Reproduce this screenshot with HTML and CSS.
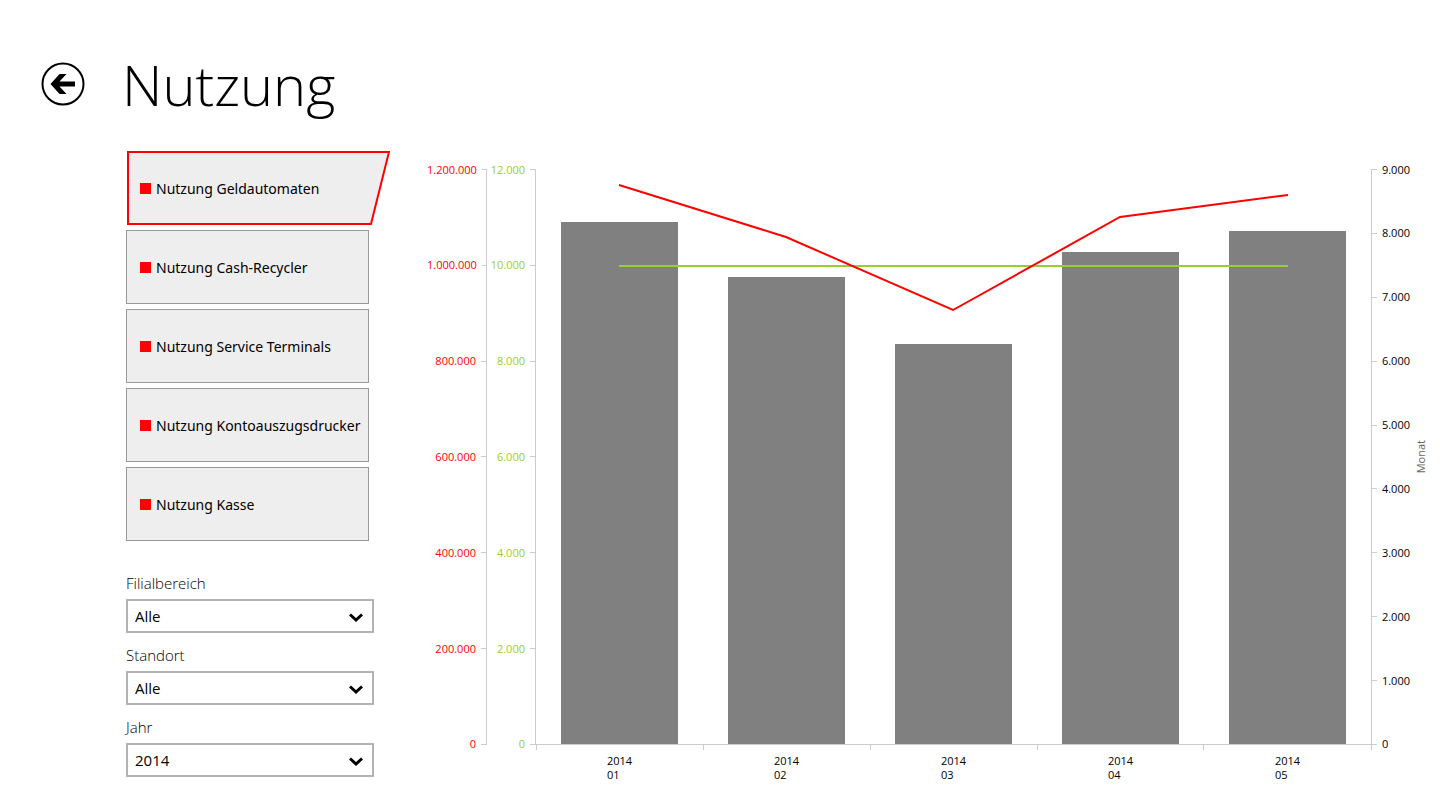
FILE: index.html
```
<!DOCTYPE html>
<html lang="de">
<head>
    <meta charset="UTF-8">
    <meta name="viewport" content="width=device-width, initial-scale=1.0">
    <title>Nutzung</title>
    <link rel="stylesheet" href="styles.css">
</head>
<body>
    <header>
        <button type="button" class="back-btn" aria-label="Zurück">
            <svg viewBox="0 0 44 44" aria-hidden="true">
                <circle cx="22" cy="22" r="20.5" fill="none" stroke="#000" stroke-width="2"/>
                <path d="M9.500 22 L18.500 12 H25.500 L18.500 19.500 H34 V24.500 H18.500 L25.500 32 H18.500 Z"/>
            </svg>
        </button>
        <h1>Nutzung</h1>
    </header>
    <main>
        <aside>
            <nav class="tiles">
                <button type="button" class="tile selected">
                    <svg class="tile-shape" viewBox="0 0 264 74" aria-hidden="true">
                        <path d="M2 1 H263 L245 73 H2 Z" fill="#eee" stroke="#f00" stroke-width="2"/>
                    </svg>
                    <span>Nutzung Geldautomaten</span>
                </button>
                <button type="button" class="tile"><span>Nutzung Cash-Recycler</span></button>
                <button type="button" class="tile"><span>Nutzung Service Terminals</span></button>
                <button type="button" class="tile"><span>Nutzung Kontoauszugsdrucker</span></button>
                <button type="button" class="tile"><span>Nutzung Kasse</span></button>
            </nav>
            <form class="filters">
                <div class="form-group">
                    <label for="filialbereich">Filialbereich</label>
                    <div class="select-box">
                        <select id="filialbereich"><option>Alle</option></select>
                        <svg viewBox="0 0 14 10" aria-hidden="true"><path d="M1 1.500 L7 7 L13 1.500"/></svg>
                    </div>
                </div>
                <div class="form-group">
                    <label for="standort">Standort</label>
                    <div class="select-box">
                        <select id="standort"><option>Alle</option></select>
                        <svg viewBox="0 0 14 10" aria-hidden="true"><path d="M1 1.500 L7 7 L13 1.500"/></svg>
                    </div>
                </div>
                <div class="form-group">
                    <label for="jahr">Jahr</label>
                    <div class="select-box">
                        <select id="jahr"><option>2014</option></select>
                        <svg viewBox="0 0 14 10" aria-hidden="true"><path d="M1 1.500 L7 7 L13 1.500"/></svg>
                    </div>
                </div>
            </form>
        </aside>
        <section class="chart">
            <ul class="axis axis-left red">
                <li>1.200.000</li>
                <li>1.000.000</li>
                <li>800.000</li>
                <li>600.000</li>
                <li>400.000</li>
                <li>200.000</li>
                <li>0</li>
            </ul>
            <ul class="axis axis-left green">
                <li>12.000</li>
                <li>10.000</li>
                <li>8.000</li>
                <li>6.000</li>
                <li>4.000</li>
                <li>2.000</li>
                <li>0</li>
            </ul>
            <div class="plot">
                <div class="bars">
                    <div class="bar" style="height: 90.8%"></div>
                    <div class="bar" style="height: 81.3%"></div>
                    <div class="bar" style="height: 69.5%"></div>
                    <div class="bar" style="height: 85.5%"></div>
                    <div class="bar" style="height: 89.2%"></div>
                </div>
                <svg class="lines" viewBox="0 0 835 575" preserveAspectRatio="none" aria-hidden="true">
                    <polyline points="83,97 752,97" stroke="#9acd32"/>
                    <polyline points="83,16 250,68 417,141 584,48 752,26" stroke="#f00"/>
                </svg>
            </div>
            <ul class="axis axis-right">
                <li>9.000</li>
                <li>8.000</li>
                <li>7.000</li>
                <li>6.000</li>
                <li>5.000</li>
                <li>4.000</li>
                <li>3.000</li>
                <li>2.000</li>
                <li>1.000</li>
                <li>0</li>
            </ul>
            <div class="axis-title">Monat</div>
            <ul class="months">
                <li><span>2014<br>01</span></li>
                <li><span>2014<br>02</span></li>
                <li><span>2014<br>03</span></li>
                <li><span>2014<br>04</span></li>
                <li><span>2014<br>05</span></li>
            </ul>
        </section>
    </main>
</body>
</html>
```
FILE: styles.css
```
* {
    box-sizing: border-box;
}
body {
    margin: 0;
    font-family: "Open Sans", "Noto Sans", sans-serif;
    background-color: #fff;
    color: #000;
}
ul {
    list-style: none;
    margin: 0;
    padding: 0;
}
header {
    display: flex;
    align-items: center;
    gap: 37px;
    padding: 46px 41px 0;
}
h1 {
    margin: 0;
    font-size: 56px;
    line-height: 76px;
    font-weight: 300;
}
.back-btn {
    width: 44px;
    height: 44px;
    padding: 0;
    border: none;
    background: none;
    cursor: pointer;
}
.back-btn svg {
    display: block;
}
main {
    display: grid;
    grid-template-columns: 248px 1fr;
    gap: 53px;
    padding: 29px 12px 0 126px;
}
aside {
    padding-bottom: 5px;
}

/* Kacheln */
.tiles {
    display: flex;
    flex-direction: column;
    gap: 5px;
    width: 243px;
}
.tile {
    position: relative;
    display: flex;
    align-items: center;
    gap: 5px;
    height: 74px;
    padding: 0 0 0 13px;
    border: 1px solid #999;
    background-color: #eee;
    font-family: "Noto Sans", "Open Sans", sans-serif;
    font-size: 14px;
    color: #000;
    white-space: nowrap;
    cursor: pointer;
}
.tile::before {
    content: "";
    flex: none;
    width: 11px;
    height: 11px;
    background-color: #f00;
    z-index: 1;
}
.tile span {
    z-index: 1;
}
.tile.selected {
    border-color: transparent;
    background: none;
}
.tile-shape {
    position: absolute;
    top: -1px;
    left: -1px;
    width: 264px;
    height: 74px;
}

/* Filter */
.filters {
    display: flex;
    flex-direction: column;
    gap: 12px;
    margin-top: 32px;
}
label {
    display: block;
    margin-bottom: 6px;
    font-size: 15px;
    line-height: 20px;
    font-weight: 300;
}
.select-box {
    position: relative;
}
select {
    display: block;
    width: 100%;
    height: 34px;
    padding: 0 30px 0 7px;
    border: 2px solid #b3b3b3;
    border-radius: 0;
    background-color: #fff;
    font-family: inherit;
    font-size: 15px;
    color: #000;
    appearance: none;
}
.select-box svg {
    position: absolute;
    top: 14px;
    right: 11px;
    width: 14px;
    height: 10px;
    fill: none;
    stroke: #000;
    stroke-width: 3;
    pointer-events: none;
}

/* Diagramm */
.chart {
    display: grid;
    grid-template-columns: 60px 49px 1fr 39px 18px;
    grid-template-rows: 1fr auto;
    padding-top: 18px;
    font-size: 11px;
    line-height: 14px;
}
.axis {
    display: flex;
    flex-direction: column;
    justify-content: space-between;
}
.axis li {
    display: flex;
    align-items: center;
    gap: 5px;
    height: 1px;
}
.axis-left {
    border-right: 1px solid #ccc;
}
.axis-left li {
    justify-content: flex-end;
}
.axis-left li::after,
.axis-right li::before {
    content: "";
    width: 5px;
    height: 1px;
    background-color: #ccc;
}
.axis-right {
    border-left: 1px solid #ccc;
}
.red {
    color: #f00;
}
.green {
    color: #9acd32;
}
.plot {
    position: relative;
    border-bottom: 1px solid #ccc;
}
.bars {
    display: grid;
    grid-template-columns: repeat(5, 1fr);
    align-items: end;
    justify-items: center;
    height: 100%;
}
.bar {
    width: 70%;
    background-color: #808080;
}
.lines {
    position: absolute;
    top: 0;
    left: 0;
    width: 100%;
    height: 100%;
    fill: none;
    stroke-width: 2;
}
.lines polyline {
    vector-effect: non-scaling-stroke;
}
.axis-title {
    align-self: center;
    justify-self: end;
    writing-mode: vertical-rl;
    transform: rotate(180deg);
    color: #666;
}
.months {
    grid-column: 3;
    display: grid;
    grid-template-columns: repeat(5, 1fr);
}
.months li {
    display: flex;
    flex-direction: column;
    align-items: center;
    gap: 4px;
}
.months li::before {
    content: "";
    width: 100%;
    height: 5px;
    border-left: 1px solid #ccc;
}
.months li:last-child::before {
    border-right: 1px solid #ccc;
}
```
